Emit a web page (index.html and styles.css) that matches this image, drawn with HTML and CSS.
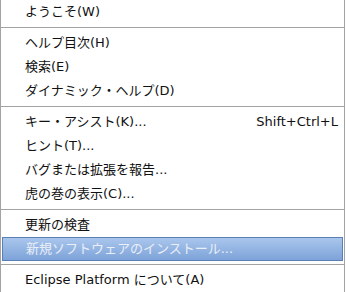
FILE: index.html
```html
<!DOCTYPE html>
<html lang="ja">
<head>
    <meta charset="UTF-8">
    <title>ヘルプ</title>
    <link rel="stylesheet" href="styles.css">
</head>
<body>
    <div class="menu">
        <div class="item">ようこそ(W)</div>
        <div class="sep"></div>
        <div class="item">ヘルプ目次(H)</div>
        <div class="item">検索(E)</div>
        <div class="item">ダイナミック・ヘルプ(D)</div>
        <div class="sep"></div>
        <div class="item"><span>キー・アシスト(K)...</span><span class="accel">Shift+Ctrl+L</span></div>
        <div class="item">ヒント(T)...</div>
        <div class="item">バグまたは拡張を報告...</div>
        <div class="item">虎の巻の表示(C)...</div>
        <div class="sep"></div>
        <div class="item">更新の検査</div>
        <div class="item selected">新規ソフトウェアのインストール...</div>
        <div class="sep"></div>
        <div class="item">Eclipse Platform について(A)</div>
    </div>
</body>
</html>
```

FILE: styles.css
```css
body {
    margin: 0;
    background: #fff;
    font-family: "DejaVu Sans", "Noto Sans CJK JP", sans-serif;
    font-size: 13px;
    color: #111;
}
.menu {
    width: 343px;
    border: 1px solid #a3a3a3;
    border-top: none;
    background: #fff;
}
.item {
    height: 24px;
    line-height: 24px;
    padding: 0 6px 0 24px;
    display: flex;
    justify-content: space-between;
    white-space: nowrap;
}
.sep {
    height: 1px;
    background: #a3a3a3;
    margin: 3px 0;
}
.selected {
    height: 22px;
    line-height: 22px;
    margin: 0 1px;
    padding-left: 23px;
    border: 1px solid #5a7fb5;
    background: linear-gradient(#a9c6ec, #7ea3d9);
    color: #e9eef7;
}
```
